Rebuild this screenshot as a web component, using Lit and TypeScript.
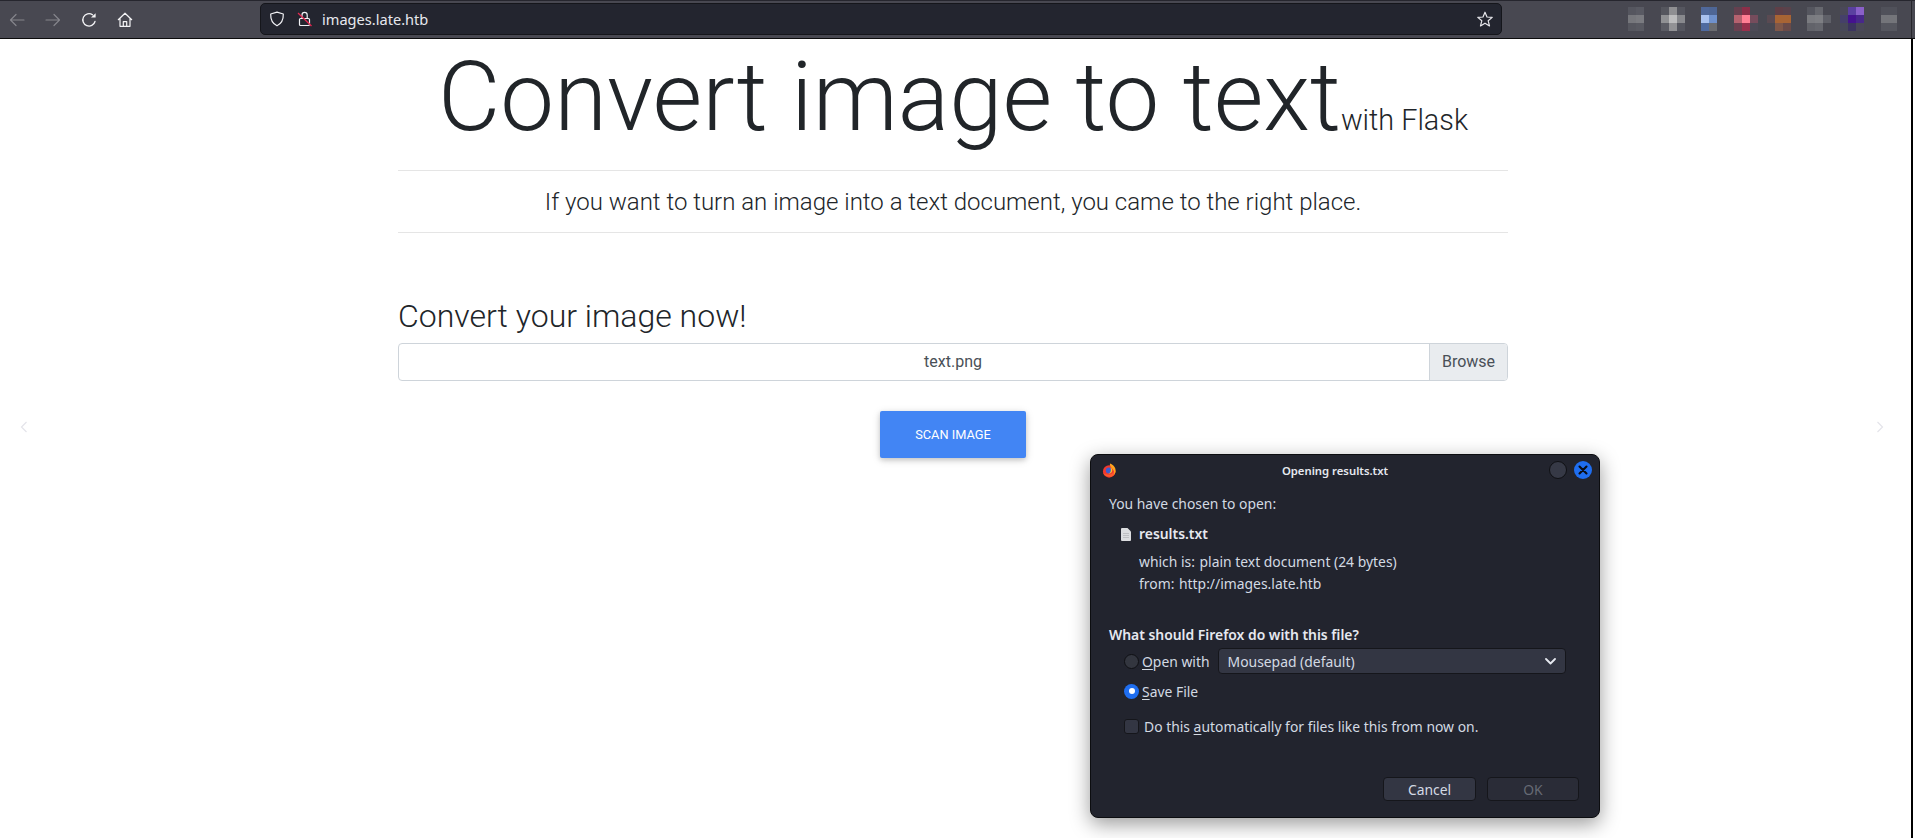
import { LitElement, html, css } from "lit";
import { customElement } from "lit/decorators.js";

const B = "#484851";
const pixels: { gap: number; rows: string }[] = [
  { gap: 0, rows: `#55565f #595a63 ${B}|#76777c #7a7b80 ${B}|#56575f #595a62 ${B}` },
  { gap: 9, rows: "#55565e #8f8f92 #55565f|#8f9093 #bdbdbe #88898d|#5b5c64 #929295 #55565f" },
  { gap: 16, rows: `#50689a #4e6695 ${B}|#a9c1ef #6f91cc ${B}|#4f6aa0 #6b6c70 ${B}` },
  { gap: 9, rows: `#65404f #8c2f49 ${B}|#b5626f #ff7f94 #764c5c|#6a4050 #99304c #4d4a56` },
  { gap: 9, rows: `${B} #5f3f47 #5a424b|#5a4a52 #a86434 #a86434|${B} #7f5749 #6a4a48` },
  { gap: 16, rows: `#55565f #66676e ${B}|#7a7b80 #7d7e83 #5f6068|#62636a #66676e ${B}` },
  { gap: 9, rows: `#4a4858 #5a40a0 #8a60c8|#45406a #45128f #48288a|#474858 #3c3460 #4a4858` },
  { gap: 17, rows: `#50515a #50515a ${B}|#74757a #74757a ${B}|#56575f #56575f ${B}` },
];

@customElement("app-root")
export class AppRoot extends LitElement {
  static styles = css`
    :host { display: block; height: 838px; position: relative; overflow: hidden; background: #fff; font-family: Roboto, sans-serif; }
    .toolbar { height: 37px; background: #484851; border-top: 1px solid #26262e; border-bottom: 1px solid #0c0c0d; display: flex; align-items: center; box-sizing: content-box; position: relative; }
    .tbedge { position: absolute; left: 1911px; top: 0; bottom: 0; width: 1px; background: #26262c; }
    .navs { display: flex; align-items: center; width: 260px; padding-left: 9px; gap: 20px; box-sizing: border-box; flex: none; }
    .navs svg { width: 16px; height: 16px; display: block; flex: none; }
    .urlbar { width: 1242px; height: 32px; margin-top: -1px; flex: none; box-sizing: border-box; background: #23252f; border: 1px solid #15161b; border-radius: 5px; display: flex; align-items: center; padding: 0 8px; color: #e7e8ee; font: 14.6px "Noto Sans", sans-serif; }
    .urlbar svg { width: 16px; height: 16px; flex: none; }
    .urlbar .lock { margin-left: 12px; margin-right: 9px; }
    .urlbar .host { flex: 1; }
    .pix { margin-left: 126px; display: flex; align-items: center; margin-top: -1px; }
    .p { display: grid; grid-template-columns: repeat(3, 8px); grid-auto-rows: 8.33px; width: 24px; flex: none; }
    .page { width: 1911px; height: 799px; box-sizing: content-box; border-right: 2px solid #000; position: relative; }
    .main { width: 1110px; margin-left: 398px; color: #212529; display: flex; flex-direction: column; }
    h1 { margin: 0; text-align: center; font-weight: 300; font-size: 96px; line-height: 117px; height: 131px; white-space: nowrap; }
    h1 small { font-size: 28.8px; font-weight: 300; }
    .rule { border: 0; border-top: 1px solid rgba(0,0,0,.1); margin: 0; }
    .lead { margin: 0; height: 61px; text-align: center; font-size: 24px; font-weight: 300; line-height: 63px; }
    h2 { margin: 64px 0 0; font-size: 32px; font-weight: 300; line-height: 38px; height: 46px; }
    .file { height: 38px; display: flex; border: 1px solid #ced4da; border-radius: 4px; box-sizing: border-box; font-size: 16px; color: #495057; line-height: 36px; overflow: hidden; }
    .file .name { flex: 1; text-align: center; padding-left: 78px; }
    .file .browse { width: 78px; background: #e9ecef; border-left: 1px solid #ced4da; text-align: center; box-sizing: border-box; }
    .scan { align-self: flex-start; margin: 30px 0 0 482px; width: 146px; height: 47px; display: flex; align-items: center; justify-content: center; background: #4285f4; color: #fff; font-size: 12.8px; border-radius: 2px; box-shadow: 0 2px 5px rgba(0,0,0,.16), 0 2px 10px rgba(0,0,0,.12); }
    .chev { position: absolute; top: 381px; width: 14px; height: 14px; }
    .chev.l { left: 17px; }
    .chev.r { left: 1873px; }
    .dialog { position: absolute; left: 1090px; top: 454px; width: 510px; height: 364px; box-sizing: border-box; background: #22242e; border: 1px solid #0c0d10; border-radius: 8px; box-shadow: 0 6px 20px rgba(0,0,0,.4); color: #d3dae3; font: 13.9px "Noto Sans", sans-serif; display: flex; flex-direction: column; padding: 0 18px; }
    .title { height: 31px; margin: 0 -18px; position: relative; display: flex; align-items: center; justify-content: center; padding-right: 20px; font-weight: 600; font-size: 11.3px; color: #e6e9f0; }
    .fx { position: absolute; left: 11px; top: 8px; width: 15px; height: 15px; }
    .wbtn { position: absolute; top: 6px; width: 18px; height: 18px; border-radius: 50%; box-sizing: border-box; }
    .wbtn.min { right: 32px; background: #363946; border: 1px solid #0f1014; }
    .wbtn.close { right: 7px; background: #1f6ef0; display: flex; align-items: center; justify-content: center; }
    .chosen { margin-top: 9px; line-height: 18px; }
    .filehead { display: flex; align-items: center; margin: 12px 0 0 12px; font-weight: 600; line-height: 18px; color: #e6e9f0; gap: 8px; }
    .meta { margin: 8px 0 0 30px; line-height: 22px; }
    .meta span { margin-right: 1px; }
    .what { margin-top: 31px; font-weight: 600; line-height: 18px; color: #e6e9f0; }
    .opt { display: flex; align-items: center; margin-left: 15px; height: 26px; }
    .radio { width: 15px; height: 15px; border-radius: 50%; box-sizing: border-box; background: #33363f; border: 1px solid #0f1014; margin-right: 3px; flex: none; }
    .radio.on { background: #1f6ef0; border: 0; display: flex; align-items: center; justify-content: center; }
    .radio.on::after { content: ""; width: 6px; height: 6px; border-radius: 50%; background: #fff; }
    .o1 { margin-top: 4px; }
    .select { margin-left: 8px; width: 348px; height: 26px; box-sizing: border-box; background: #333643; border: 1px solid #15161b; border-radius: 4px; display: flex; align-items: center; justify-content: space-between; padding: 0 9px; flex: none; }
    .o2 { margin-top: 4px; }
    .o3 { margin-top: 9px; }
    .check { width: 15px; height: 15px; box-sizing: border-box; background: #333643; border: 1px solid #15161b; border-radius: 3px; margin-right: 5px; flex: none; }
    .btns { margin-top: auto; margin-bottom: 16px; display: flex; justify-content: flex-end; gap: 11px; margin-right: 2px; }
    .btn { width: 93px; height: 24px; box-sizing: border-box; border: 1px solid #15161b; border-radius: 4px; background: #333643; display: flex; align-items: center; justify-content: center; }
    .btn.off { background: #2a2c37; color: #666a74; width: 92px; }
    u { text-underline-offset: 2px; }
  `;

  render() {
    return html`
      <div class="toolbar">
        <div class="navs">
          <svg viewBox="0 0 16 16" fill="none" stroke="#85858c" stroke-width="1.2" stroke-linecap="round" stroke-linejoin="round"><path d="M15 8H1.5M7 2.5 1.5 8 7 13.5"/></svg>
          <svg viewBox="0 0 16 16" fill="none" stroke="#85858c" stroke-width="1.2" stroke-linecap="round" stroke-linejoin="round"><path d="M1 8h13.5M9 2.5 14.5 8 9 13.5"/></svg>
          <svg viewBox="0 0 16 16" fill="none" stroke="#f4f4f6" stroke-width="1.3" stroke-linecap="round"><path d="M14 9.5A6.2 6.2 0 1 1 11.5 2.8"/><path d="M10 5.6h4.6V1.2z" fill="#f4f4f6" stroke="none"/></svg>
          <svg viewBox="0 0 16 16" fill="none" stroke="#f4f4f6" stroke-width="1.2" stroke-linejoin="round"><path d="M1 8 8 1.2 15 8M3 6.5V14.3h10V6.5M6.3 14.3V9.6h3.4v4.7"/></svg>
        </div>
        <div class="urlbar">
          <svg viewBox="0 0 16 16" fill="none" stroke="#f0f0f4" stroke-width="1.2" stroke-linejoin="round"><path d="M8 1.2 14.3 3c.2 5.5-1.6 9.5-6.3 11.8C3.3 12.5 1.5 8.5 1.7 3z"/></svg>
          <svg class="lock" viewBox="0 0 16 16" fill="none" stroke="#f0f0f4" stroke-width="1.2"><rect x="2.5" y="7.5" width="10" height="7" rx="1"/><path d="M5 7.5V4a2.6 2.6 0 0 1 5.2 0v3.5"/><path d="M1 2 14.5 15" stroke="#e22850" stroke-width="1.3"/></svg>
          <span class="host">images.late.htb</span>
          <svg viewBox="0 0 16 16" fill="none" stroke="#e8e8ec" stroke-width="1.2" stroke-linejoin="round"><path d="M8 1.2 10 6l5.2.4-4 3.4 1.3 5.1L8 12.2l-4.5 2.7 1.3-5.1-4-3.4L6 6z"/></svg>
        </div>
        <div class="pix">
          ${pixels.map((p) => html`<div class="p" style="margin-left:${p.gap}px">${p.rows.split("|").flatMap((r) => r.split(" ")).map((c) => html`<i style="background:${c}"></i>`)}</div>`)}
        </div>
        <div class="tbedge"></div>
      </div>

      <div class="page">
        <div class="main">
          <h1>Convert image to text<small>with Flask</small></h1>
          <hr class="rule" />
          <p class="lead">If you want to turn an image into a text document, you came to the right place.</p>
          <hr class="rule" />
          <h2>Convert your image now!</h2>
          <div class="file"><div class="name">text.png</div><div class="browse">Browse</div></div>
          <div class="scan">SCAN IMAGE</div>
        </div>
        <svg class="chev l" viewBox="0 0 14 14" fill="none" stroke="#e4e4ea" stroke-width="1.2"><path d="M9.5 2 4.5 7l5 5"/></svg>
        <svg class="chev r" viewBox="0 0 14 14" fill="none" stroke="#e4e4ea" stroke-width="1.2"><path d="M4.5 2l5 5-5 5"/></svg>
      </div>

      <div class="dialog">
        <div class="title">
          <svg class="fx" viewBox="0 0 16 16">
            <circle cx="7.6" cy="9" r="6.6" fill="#f0392f"/>
            <path d="M1.5 11c1.5 3.5 7 5 10.5 2.5 2.5-1.8 3-4.5 1.5-6.5-.5 3-3 5.5-6 5.5-2.5 0-4.5-.5-6-1.5z" fill="#ff5a2a"/>
            <path d="M8.5.6c3.8 1.4 6.3 4.2 6 8-.1 1.5-.7 2.7-1.5 3.6.4-3-1-5.6-2.6-7C9.4 4.2 8 2.8 8.5.6z" fill="#ffa41e"/>
            <circle cx="7.2" cy="8" r="3.1" fill="#3d5fd0"/>
            <path d="M9 4.5c1.8 1 2.5 3.3 1.4 5.2-.8 1.3-2.2 2-3.6 1.8 1.6-.7 2.6-2 2.7-3.5C9.6 6.8 9.3 5.6 9 4.5z" fill="#ffc324"/>
          </svg>
          Opening results.txt
          <span class="wbtn min"></span>
          <span class="wbtn close"><svg width="10" height="10" viewBox="0 0 10 10" stroke="#0b0d14" stroke-width="2.1" stroke-linecap="round"><path d="M1.5 1.5l7 7M8.5 1.5l-7 7"/></svg></span>
        </div>
        <div class="chosen">You have chosen to open:</div>
        <div class="filehead">
          <svg width="10" height="13" viewBox="0 0 10 13"><path d="M0 1a1 1 0 0 1 1-1h5.5L10 3.5V12a1 1 0 0 1-1 1H1a1 1 0 0 1-1-1z" fill="#dcdde0"/><path d="M2 5.5h6M2 7.5h6M2 9.5h6" stroke="#b0b1b6" stroke-width=".7"/></svg>
          results.txt
        </div>
        <div class="meta">
          <div><span>which is:</span> plain text document (24 bytes)</div>
          <div><span>from:</span> http://images.late.htb</div>
        </div>
        <div class="what">What should Firefox do with this file?</div>
        <div class="opt o1"><span class="radio"></span><span><u>O</u>pen with</span>
          <div class="select">Mousepad (default)<svg width="11" height="7" viewBox="0 0 11 7" fill="none" stroke="#e6e9f0" stroke-width="1.8" stroke-linecap="round" stroke-linejoin="round"><path d="M1 1l4.5 4.5L10 1"/></svg></div>
        </div>
        <div class="opt o2"><span class="radio on"></span><span><u>S</u>ave File</span></div>
        <div class="opt o3"><span class="check"></span><span>Do this <u>a</u>utomatically for files like this from now on.</span></div>
        <div class="btns"><div class="btn">Cancel</div><div class="btn off">OK</div></div>
      </div>
    `;
  }
}
